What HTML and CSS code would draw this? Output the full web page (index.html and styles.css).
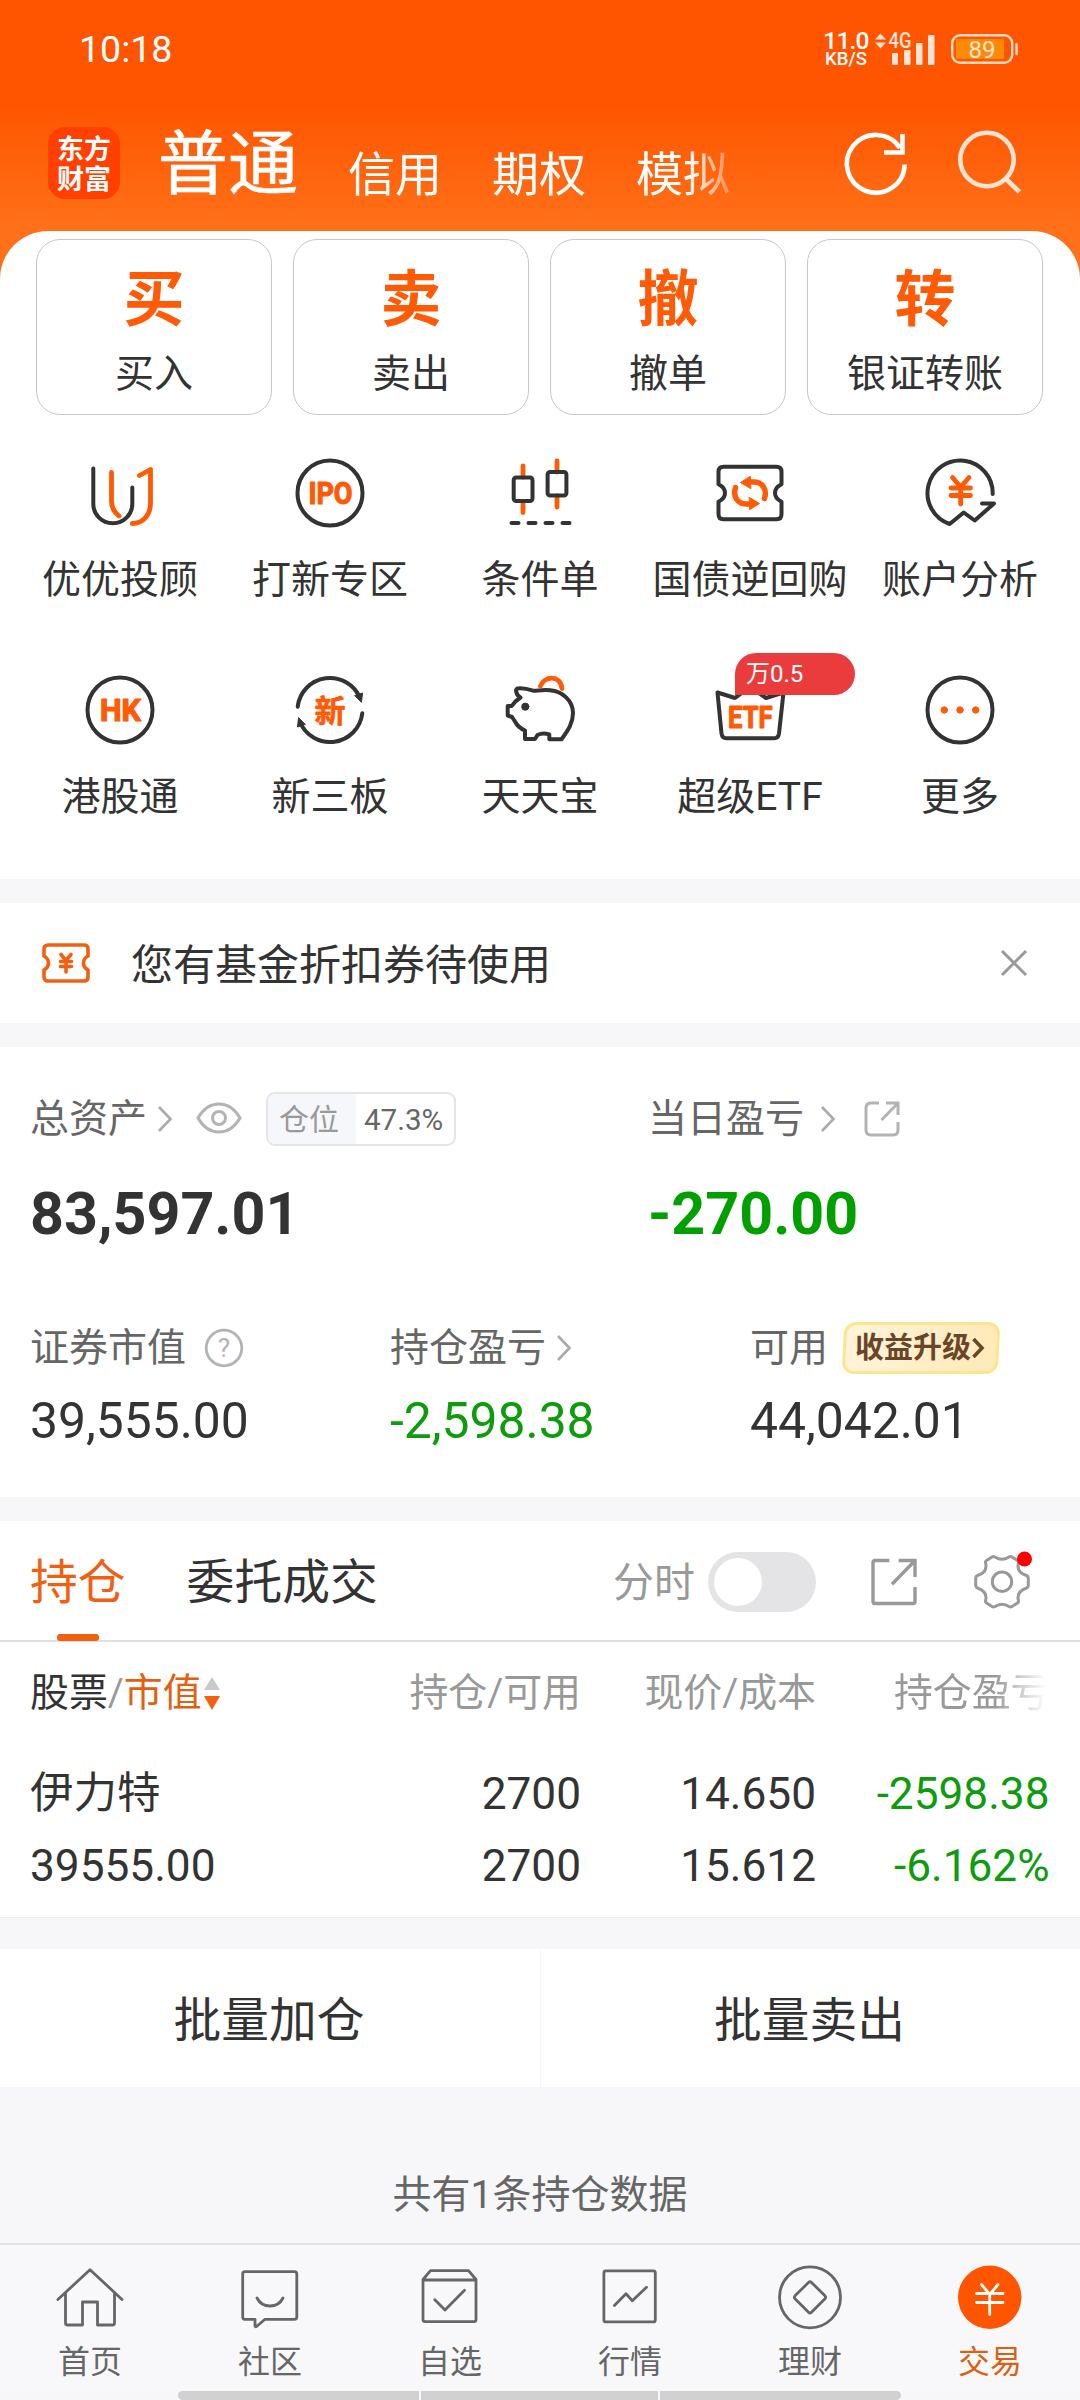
FILE: index.html
```html
<!DOCTYPE html>
<html lang="zh-CN">
<head>
<meta charset="utf-8">
<title>交易</title>
<link rel="stylesheet" href="styles.css">
</head>
<body>
<svg class="defs" width="0" height="0">
  <symbol id="chev" viewBox="0 0 16 28"><path d="M2 2L13.5 14L2 26"/></symbol>
  <symbol id="export" viewBox="0 0 48 48"><path d="M19.3 2.5H5Q3 2.5 3 4.5V43.5Q3 45.5 5 45.5H43Q45 45.5 45 43.5V29M28.7 2.5H45V19M45 2.5L22 26.3"/></symbol>
  <symbol id="export-round" viewBox="0 0 36 36"><path d="M15 2H7Q2 2 2 7V29Q2 34 7 34H29Q34 34 34 29V21M22 2H34V14M34 2L17.500 19"/></symbol>
</svg>
<div class="screen">
  <div class="top">
    <div class="status">
      <span class="clock">10:18</span>
      <div class="indicators">
        <div class="speed"><span class="speed-num">11.0</span><span class="speed-unit">KB/S</span></div>
        <svg class="signal" width="64" height="36" viewBox="0 0 64 36">
          <path d="M3 8.500L8.500 2.500L14 8.500ZM3 11.500L8.500 17.500L14 11.500Z"/>
          <rect x="20" y="22" width="6" height="12" rx="1"/><rect x="32" y="19" width="6.500" height="15" rx="1"/>
          <rect x="44" y="12" width="6.500" height="22" rx="1"/><rect x="56" y="4" width="6.500" height="30" rx="1"/>
          <text x="16.500" y="17" textLength="23" lengthAdjust="spacingAndGlyphs">4G</text>
        </svg>
        <svg class="battery" width="70" height="36" viewBox="0 0 70 36">
          <rect x="2.200" y="4.200" width="60" height="27.600" rx="8" class="bat-case"/>
          <rect x="6" y="8" width="48" height="20" rx="1" class="bat-fill"/>
          <path d="M66.500 13V23" class="bat-case"/>
          <text x="32" y="26.700" text-anchor="middle">89</text>
        </svg>
      </div>
    </div>
    <div class="header">
      <div class="logo"><span>东方</span><span>财富</span></div>
      <div class="accounts"><b>普通</b><span>信用</span><span>期权</span><span>模拟</span></div>
      <svg class="hicon" width="72" height="72" viewBox="0 0 72 72"><path d="M64.700 36.500A28.900 28.900 0 1 1 60 20M62.500 6V24.500H44"/></svg>
      <svg class="hicon dim" width="72" height="72" viewBox="0 0 72 72"><circle cx="33" cy="31.500" r="26.700"/><path d="M51.500 50.500L65.500 64"/></svg>
    </div>
    <div class="sheet">
      <div class="cards">
        <div class="card"><b>买</b><span>买入</span></div>
        <div class="card"><b>卖</b><span>卖出</span></div>
        <div class="card"><b>撤</b><span>撤单</span></div>
        <div class="card"><b>转</b><span>银证转账</span></div>
      </div>
      <div class="grid">
        <div class="item">
          <svg class="gi" viewBox="0 0 72 72"><path d="M9.300 11.500V47a19.500 19.300 0 0 0 39 0V30.500"/><path class="o" d="M27.500 15.500V44c0 6 2.500 11 7.500 15M55.500 18.500L66.500 12.500V46c0 12-7 20-18.300 20.500"/></svg>
          <span>优优投顾</span>
        </div>
        <div class="item">
          <svg class="gi" viewBox="0 0 72 72"><circle cx="36" cy="36" r="32.500"/><text x="14.500" y="47" textLength="44" lengthAdjust="spacingAndGlyphs">IPO</text></svg>
          <span>打新专区</span>
        </div>
        <div class="item">
          <svg class="gi" viewBox="0 0 72 72"><path class="o" d="M19 9V20M19 45V55.500M53 4V15M53 39V50"/><rect x="9.700" y="20.500" width="18.800" height="23.500" rx="2.500"/><rect x="43.600" y="15" width="18.800" height="23.500" rx="2.500"/><path d="M7.500 66H14.500M24.500 66H31.500M41.500 66H48.500M58.500 66H65.500"/></svg>
          <span>条件单</span>
        </div>
        <div class="item">
          <svg class="gi" viewBox="0 0 72 72"><path d="M9.500 9.700H62.500Q67.500 9.700 67.500 14.700V27.300Q61 30.500 61 36T67.500 44.700V57.300Q67.500 62.300 62.500 62.300H9.500Q4.500 62.300 4.500 57.300V44.700Q11 41.500 11 36T4.500 27.300V14.700Q4.500 9.700 9.500 9.700Z"/><g><path class="o wide" d="M21.500 30.500C18.500 40 24 47 32 47H37"/><path class="of" d="M35.500 40.500L45.500 46.500L36 52.500Z"/></g><g transform="rotate(180 36 36)"><path class="o wide" d="M21.500 30.500C18.500 40 24 47 32 47H37"/><path class="of" d="M35.500 40.500L45.500 46.500L36 52.500Z"/></g></svg>
          <span>国债逆回购</span>
        </div>
        <div class="item">
          <svg class="gi" viewBox="0 0 72 72"><path d="M68.700 37A32.600 32.600 0 1 0 25.700 67L39.700 55.500L50.700 63.500L70 46.500H58"/><path class="o" d="M28.500 20.500L36.700 30L45 20.500M36.700 30V47M27 31H46.500M27 38.500H46.500"/></svg>
          <span>账户分析</span>
        </div>
        <div class="item">
          <svg class="gi" viewBox="0 0 72 72"><circle cx="36" cy="36" r="32.500"/><text x="16" y="47" textLength="41" lengthAdjust="spacingAndGlyphs">HK</text></svg>
          <span>港股通</span>
        </div>
        <div class="item">
          <svg class="gi" viewBox="0 0 72 72"><path d="M3.700 32.700A32.500 32.500 0 0 1 66 24M68.300 39.300A32.500 32.500 0 0 1 6 48"/><path class="df" d="M61 21.500L68.500 19L67.500 28ZM11 50.500L3.500 53L4.500 44Z"/><text class="xin" x="36" y="47.500" text-anchor="middle">新</text></svg>
          <span>新三板</span>
        </div>
        <div class="item">
          <svg class="gi" viewBox="0 0 72 72"><path d="M12.300 18C11.500 15 13 14.300 15 14.300C20 14 24 15 29 16.700C33 17 38 15.500 46 16.300C59 17.500 69 27 69 39C69 50 63 57.500 57.500 65.300H45.300V60.500Q39 58.500 33.500 61L31 65H21V56.500Q14 53.500 11 47.500L8 43L3.700 41.500V32H7.700Q11 27 16.500 23.500Q13 21.500 12.300 18Z"/><circle cx="21.300" cy="32.700" r="3.600" class="df"/><path class="o" d="M36.500 12C40 2 56 0 58 14.500"/></svg>
          <span>天天宝</span>
        </div>
        <div class="item">
          <svg class="gi" viewBox="0 0 72 72"><path d="M3.500 18.500L21 24L36 13L52 24L69.500 18.500L65 59.500Q64.300 64.300 60 64.300H12.500Q8.200 64.300 7.500 59.500Z"/><text x="14" y="53.500" textLength="44.500" lengthAdjust="spacingAndGlyphs">ETF</text></svg>
          <i class="promo">万0.5</i>
          <span>超级ETF</span>
        </div>
        <div class="item">
          <svg class="gi" viewBox="0 0 72 72"><circle cx="36" cy="36" r="32.500"/><g class="of"><circle cx="20.300" cy="36" r="3.200"/><circle cx="36" cy="36" r="3.200"/><circle cx="51.700" cy="36" r="3.200"/></g></svg>
          <span>更多</span>
        </div>
      </div>
    </div>
  </div>

  <div class="notice">
    <svg class="coupon" width="50" height="42" viewBox="0 0 50 42"><path d="M7 3H43Q47 3 47 7V14Q42.500 16.500 42.500 21T47 28V35Q47 39 43 39H7Q3 39 3 35V28Q7.500 25.500 7.500 21T3 14V7Q3 3 7 3Z"/><path d="M20 12.500L25 18.500L30 12.500M25 18.500V30M19.500 19.500H30.500M19.500 24.500H30.500"/></svg>
    <span>您有基金折扣券待使用</span>
    <svg class="close" width="28" height="28" viewBox="0 0 28 28"><path d="M2 2L26 26M26 2L2 26"/></svg>
  </div>

  <div class="assets">
    <div class="row two">
      <div class="col">
        <div class="label"><span>总资产</span><svg class="chev c1"><use href="#chev"/></svg>
          <svg class="eye" width="46" height="34" viewBox="0 0 46 34"><path d="M2 17Q10 3 23 3T44 17Q36 31 23 31T2 17Z"/><circle cx="23" cy="17" r="6.500"/></svg>
          <div class="ratio"><span>仓位</span><em>47.3%</em></div>
        </div>
        <div class="big">83,597.01</div>
      </div>
      <div class="col">
        <div class="label"><span>当日盈亏</span><svg class="chev c2"><use href="#chev"/></svg><svg class="exp-s"><use href="#export-round"/></svg></div>
        <div class="big green">-270.00</div>
      </div>
    </div>
    <div class="row three">
      <div class="col">
        <div class="label"><span>证券市值</span><svg class="help" width="40" height="40" viewBox="0 0 40 40"><circle cx="20" cy="20" r="17.800"/><text x="20" y="29" text-anchor="middle">?</text></svg></div>
        <div class="val">39,555.00</div>
      </div>
      <div class="col">
        <div class="label"><span>持仓盈亏</span><svg class="chev c1"><use href="#chev"/></svg></div>
        <div class="val green">-2,598.38</div>
      </div>
      <div class="col">
        <div class="label"><span>可用</span><div class="upgrade"><b>收益升级</b><svg width="14" height="24" viewBox="0 0 14 24"><path d="M2.500 3L11 12L2.500 21"/></svg></div></div>
        <div class="val">44,042.01</div>
      </div>
    </div>
  </div>

  <div class="tabs">
    <span class="tab active">持仓</span>
    <span class="tab">委托成交</span>
    <span class="fs">分时</span>
    <div class="toggle"><i></i></div>
    <svg class="exp-l"><use href="#export"/></svg>
    <svg class="gear" width="60" height="60" viewBox="0 0 60 60"><path d="M20 5Q21.500 4 23 5Q30 9.500 37 5Q38.500 4 40 5L45.500 8.500Q47 9.500 46.300 11.500Q44.500 20.500 54.500 23.500Q56.300 24.200 56.300 26V33.500Q56.300 35.300 54.500 36Q44.500 39.500 46.300 48Q47 50 45.500 51L40 54.500Q38.500 55.500 37 54.500Q30 50 23 54.500Q21.500 55.500 20 54.500L14.500 51Q13 50 13.700 48Q15.500 39.500 5.500 36Q3.700 35.300 3.700 33.500V26Q3.700 24.200 5.500 23.500Q15.500 20.500 13.700 11.500Q13 9.500 14.500 8.500Z"/><circle cx="30" cy="29.700" r="9.700"/><circle class="dot" cx="52.500" cy="7" r="7.500"/></svg>
  </div>

  <div class="table">
    <div class="tr th">
      <div class="first"><span class="dark">股票</span>/<span class="sorted">市值</span><svg width="18" height="36" viewBox="0 0 18 36"><path d="M1 15L9 2L17 15Z" fill="#c9c9c9"/><path d="M1 21L9 35L17 21Z" fill="#f2600f"/></svg></div>
      <span>持仓/可用</span><span>现价/成本</span><span class="fade">持仓盈亏</span>
    </div>
    <div class="tr"><span class="first name">伊力特</span><span>2700</span><span>14.650</span><span class="green">-2598.38</span></div>
    <div class="tr"><span class="first">39555.00</span><span>2700</span><span>15.612</span><span class="green">-6.162%</span></div>
  </div>

  <div class="batch"><span>批量加仓</span><span>批量卖出</span></div>
  <div class="total">共有1条持仓数据</div>

  <div class="nav">
    <div class="navitem"><svg viewBox="0 0 72 72"><path d="M3.900 38.500L36 8.700L68 38.500M11.500 32V62Q11.500 64 13.500 64H28.500V41H43.500V64H58.500Q60.500 64 60.500 62V32"/></svg><span>首页</span></div>
    <div class="navitem"><svg viewBox="0 0 72 72"><path d="M11 10.700H60.500Q62.800 10.700 62.800 13V56Q62.800 58.300 60.500 58.300H31L22.500 65.500Q21 66.300 21 64.500V58.300H11Q8.700 58.300 8.700 56V13Q8.700 10.700 11 10.700ZM23 37Q27 45 36 45T49 37"/></svg><span>社区</span></div>
    <div class="navitem"><svg viewBox="0 0 72 72"><path d="M9 18.500L16.500 9.700H54.500L62 18.500V58.500Q62 60.700 60 60.700H11Q9 60.700 9 58.500ZM9 19H62M20.800 38.700L31 49L50.500 29.300"/></svg><span>自选</span></div>
    <div class="navitem"><svg viewBox="0 0 72 72"><rect x="9.900" y="9.900" width="51.400" height="51" rx="2"/><path d="M20.400 44.500L32 32.700L38.300 39.700L52.500 26.300"/></svg><span>行情</span></div>
    <div class="navitem"><svg viewBox="0 0 72 72"><circle cx="36" cy="36.300" r="30.500"/><path d="M34.500 21.500Q36 20 37.500 21.500L51 34.800Q52.300 36.300 51 37.800L37.500 51.200Q36 52.700 34.500 51.200L21 37.800Q19.700 36.300 21 34.800Z"/></svg><span>理财</span></div>
    <div class="navitem on"><svg viewBox="0 0 72 72"><circle cx="35.700" cy="36.300" r="31.700"/><path d="M27.500 23.500L35.700 33.500L44 23.500M35.700 33.500V53.500M22.500 32.500H49M22.500 41.500H49"/></svg><span>交易</span></div>
  </div>
  <div class="homebar"><i></i><i></i><i></i></div>
</div>
</body>
</html>
```
FILE: styles.css
```css
* { box-sizing: border-box; }
body {
  margin: 0;
  background: #f7f7fa;
  font-family: Roboto, "Noto Sans CJK SC", sans-serif;
  color: #333;
}
i, em { font-style: normal; }
svg { display: block; fill: none; flex: none; }
.defs { position: absolute; }
.screen { width: 1080px; height: 2400px; display: flex; flex-direction: column; overflow: hidden; }
.screen > * { flex-shrink: 0; }
.green { color: #0c9c0c; }

/* status bar and header */
.top { background: linear-gradient(#ff5500 0, #ff5500 105px, #ff7018 225px, #ff7018 100%); height: 879px; display: flex; flex-direction: column; }
.status { flex: none; height: 98px; padding: 0 60px 0 79px; display: flex; justify-content: space-between; align-items: center; color: #fff; }
.clock { font-size: 37.500px; line-height: 40px; }
.indicators { display: flex; align-items: center; }
.speed { display: flex; flex-direction: column; align-items: center; width: 44px; font-weight: 500; padding-top: 2px; }
.speed-num { font-size: 24.500px; line-height: 19px; letter-spacing: -0.800px; }
.speed-unit { font-size: 18.500px; line-height: 19px; }
.signal { margin: 0 14px 0 4px; fill: #ffe3d3; overflow: visible; }
.signal text { font-size: 21.500px; font-weight: 500; }
.bat-case { stroke: #ffd9c2; stroke-width: 2.400; stroke-linecap: round; }
.bat-fill { fill: #ff8a05; }
.battery text { font-size: 24px; fill: #ffe3d3; }
.header { flex: none; height: 133px; padding: 29px 54px 0 48px; display: flex; align-items: flex-start; color: #fff; }
.logo { width: 72px; height: 72px; border-radius: 17px; background: #ff4000; display: flex; flex-direction: column; align-items: center; padding-top: 6px; font-family: "Noto Sans CJK SC", sans-serif; font-weight: 700; }
.logo span { font-size: 27px; line-height: 29.500px; }
.accounts { display: flex; gap: 50px; align-items: baseline; margin-left: 38px; width: 640px; font-size: 47px; line-height: 76px; white-space: nowrap; -webkit-mask-image: linear-gradient(90deg, #000 530px, transparent 588px); mask-image: linear-gradient(90deg, #000 530px, transparent 588px); }
.accounts b { font-size: 70px; font-weight: 400; -webkit-text-stroke: 0.600px #fff; }
.accounts span { padding-top: 2px; margin-bottom: -2px; transform: translateY(2px); }
.hicon { stroke: #fff; stroke-width: 4.600; margin-top: 1px; margin-left: 42px; }
.hicon.dim { stroke: #ffe3d3; }

/* quick actions */
.sheet { flex: 1; background: #fff; border-radius: 48px 48px 0 0; padding-top: 8px; }
.cards { display: grid; grid-template-columns: repeat(4, 236px); gap: 21px; padding: 0 36px; }
.card { height: 176px; border: 1.500px solid #c8c8c8; border-radius: 24px; display: flex; flex-direction: column; align-items: center; }
.card b { font-size: 61px; line-height: 70px; margin-top: 25px; color: #ff5a05; }
.card span { font-size: 39px; line-height: 44px; margin-top: 17px; }
.grid { display: grid; grid-template-columns: repeat(5, 210px); grid-template-rows: 217px 200px; padding: 42px 15px 0; }
.item { position: relative; display: flex; flex-direction: column; align-items: center; }
.item span { font-size: 39px; line-height: 50px; margin-top: 26px; white-space: nowrap; }
.gi { width: 72px; height: 72px; stroke: #333; stroke-width: 4; stroke-linecap: round; stroke-linejoin: round; }
.gi .o { stroke: #ff5a05; stroke-width: 4.800; }
.gi .wide { stroke-width: 5.500; }
.gi .of { fill: #ff5a05; stroke: #ff5a05; stroke-width: 1; }
.gi .df { fill: #333; stroke-width: 1; }
.gi text { fill: #ff5a05; stroke: #ff5a05; stroke-width: 1.200; font-size: 30.500px; font-weight: 700; }
.gi .xin { font-size: 31px; stroke-width: 0.700; }
.promo { position: absolute; left: 90px; top: -21px; width: 120px; height: 42px; border-radius: 21px 21px 21px 0; background: #ea3c3c; color: #fff; font-size: 24px; line-height: 43px; padding-left: 11px; }

/* notice */
.notice { margin-top: 24px; height: 120px; background: #fff; display: flex; align-items: center; padding: 0 52px 0 41px; font-size: 42px; }
.notice span { margin-left: 40px; line-height: 60px; flex: 1; padding-top: 6px; }
.coupon { stroke: #f2600f; stroke-width: 3.600; stroke-linecap: round; }
.close { stroke: #999; stroke-width: 3; }

/* assets */
.assets { margin-top: 24px; height: 450px; background: #fff; padding: 42px 30px 0; }
.row { display: grid; }
.two { grid-template-columns: 618px 1fr; }
.three { grid-template-columns: 360px 360px 1fr; margin-top: 69px; }
.label { height: 60px; display: flex; align-items: center; font-size: 39px; line-height: 60px; color: #666; }
.chev { width: 16px; height: 28px; stroke: #aaa; stroke-width: 2.600; margin-left: 10px; }
.c2 { margin-left: 16px; }
.eye { stroke: #b3b3b3; stroke-width: 3; margin-left: 23px; margin-top: -3px; }
.ratio { display: flex; margin-left: 24px; height: 54px; border: 2px solid #e4e5e9; border-radius: 9px; font-size: 30px; line-height: 52px; width: 190px; overflow: hidden; }
.ratio span { background: #f6f7fa; color: #999; width: 88px; padding-left: 11px; }
.ratio em { padding-left: 8px; font-size: 29.500px; }
.exp-s { width: 36px; height: 36px; stroke: #b3b3b3; stroke-width: 3; margin-left: 28px; }
.big { font-size: 59.200px; font-weight: 700; line-height: 70px; margin-top: 30px; }
.big.green { color: #00a000; }
.help { stroke: #b3b3b3; stroke-width: 2.800; margin-left: 18px; }
.help text { font-size: 26px; fill: #b3b3b3; stroke: none; }
.val { font-size: 49.800px; line-height: 60px; margin-top: 13px; }
.upgrade { position: relative; z-index: 0; margin-left: 15px; width: 156px; height: 52px; display: flex; align-items: center; padding-left: 12px; color: #6b4528; font-size: 29px; line-height: 52px; }
.upgrade::before { content: ""; position: absolute; z-index: -1; inset: 0; border-radius: 12px; border: 3px solid #fbe68d; background: linear-gradient(90deg, #fff4da, #fee9b8); transform: skewX(-3deg); }
.upgrade svg { stroke: #6b4528; stroke-width: 3.600; }

/* holding tabs */
.tabs { margin-top: 24px; height: 121px; background: #fff; border-bottom: 2px solid #dfe0e2; display: flex; align-items: center; padding: 0 48px 0 30px; }
.tab { position: relative; font-size: 47.800px; line-height: 120px; margin-right: 61px; padding-top: 5px; }
.active { color: #f2600f; }
.active::after { content: ""; position: absolute; left: 27px; bottom: 2px; width: 42px; height: 7px; border-radius: 3px; background: #f2600f; }
.fs { margin-left: auto; color: #999; font-size: 41px; line-height: 60px; padding-top: 5px; }
.toggle { width: 108px; height: 60px; border-radius: 30px; background: #e4e4e6; padding: 6px; margin: 2px 54px 0 13px; }
.toggle i { display: block; width: 48px; height: 48px; border-radius: 50%; background: #fff; }
.exp-l { width: 48px; height: 48px; stroke: #999; stroke-width: 3.400; margin-right: 54px; margin-top: 2px; }
.gear { stroke: #999; stroke-width: 3; margin-top: 2px; overflow: visible; }
.gear .dot { fill: #f00; stroke: none; }

/* holdings */
.table { height: 276px; background: #fff; border-bottom: 1px solid #ebecee; padding-top: 12px; }
.tr { display: grid; grid-template-columns: 300px 251px 235px 233.500px; padding-left: 30px; height: 72px; line-height: 72px; font-size: 44.200px; text-align: right; }
.first { text-align: left; }
.name { font-size: 43.500px; }
.th { font-size: 38.900px; color: #999; height: 104px; padding-top: 3px; }
.th .first { display: flex; align-items: center; height: 72px; }
.th svg { margin-left: 1px; }
.dark { color: #333; }
.sorted { color: #e2600f; }
.fade { -webkit-mask-image: linear-gradient(90deg, #000 178px, transparent 230px); mask-image: linear-gradient(90deg, #000 178px, transparent 230px); }

.batch { margin-top: 31px; height: 138px; background: #fff; display: grid; grid-template-columns: 1fr 1fr; font-size: 47.700px; line-height: 144px; text-align: center; }
.batch span { padding-right: 2px; }
.batch span + span { border-left: 1px solid #f4f5f7; }
.total { height: 156px; padding-top: 78px; line-height: 60px; font-size: 39px; color: #666; text-align: center; }

/* bottom navigation */
.nav { height: 148px; border-top: 2px solid #e3e4e6; background: #f8f8fb; display: grid; grid-template-columns: repeat(6, 180px); padding-top: 16px; }
.navitem { display: flex; flex-direction: column; align-items: center; color: #666; font-size: 32px; line-height: 40px; }
.navitem svg { width: 72px; height: 72px; stroke: #666; stroke-width: 2.800; stroke-linecap: round; stroke-linejoin: round; margin-bottom: 9px; }
.on { color: #dd5f12; }
.on svg { stroke: #fff; }
.on circle { fill: #ff5500; stroke: none; }
.homebar { height: 9px; width: 723px; margin-left: 178px; display: grid; grid-template-columns: 241px 237px 241px; gap: 2px; }
.homebar i { background: #d1d1d1; }
.homebar i:first-child { border-radius: 5px 0 0 5px; }
.homebar i:last-child { border-radius: 0 5px 5px 0; }
```
